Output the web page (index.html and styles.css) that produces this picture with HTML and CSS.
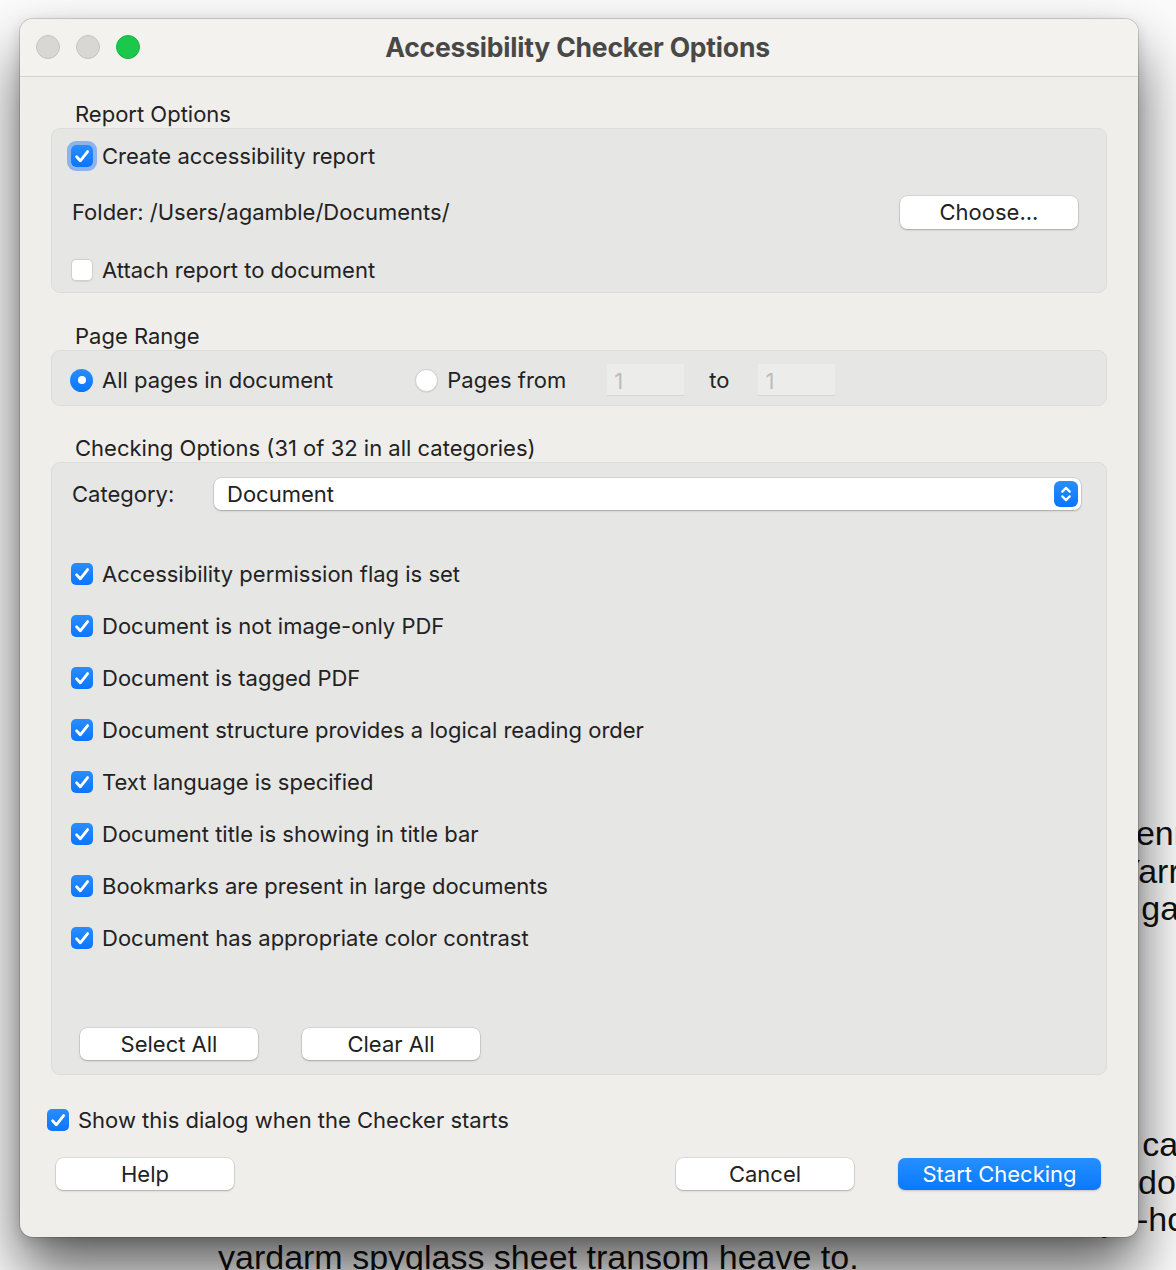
FILE: index.html
```html
<!DOCTYPE html>
<html lang="en">
<head>
<meta charset="utf-8">
<title>Accessibility Checker Options</title>
<link rel="stylesheet" href="styles.css">
</head>
<body>
<div class="desktop">
  <div class="doc">
    <div class="doc-line d1">pennant hail-shot</div>
    <div class="doc-line d2">Yarr grog</div>
    <div class="doc-line d3">a gangway</div>
    <div class="doc-line d4">o cannon</div>
    <div class="doc-line d5">down</div>
    <div class="doc-line d6">yo-ho-ho</div>
    <div class="doc-line d7">yardarm spyglass sheet transom heave to.</div>
  </div>

  <div class="window">
    <div class="titlebar">
      <div class="lights">
        <span class="light gray"></span>
        <span class="light gray"></span>
        <span class="light green"></span>
      </div>
      <div class="title">Accessibility Checker Options</div>
    </div>

    <div class="content">
      <div class="section-label first">Report Options</div>
      <div class="group report">
        <div class="row">
          <span class="cb on focus"><svg viewBox="0 0 22 22"><path d="M5.6 11.8l3.7 4L16.6 6.6"/></svg></span>
          <span class="lbl">Create accessibility report</span>
        </div>
        <div class="row folder">
          <span class="lbl path">Folder: /Users/agamble/Documents/</span>
          <button class="btn choose">Choose...</button>
        </div>
        <div class="row attach">
          <span class="cb off"></span>
          <span class="lbl">Attach report to document</span>
        </div>
      </div>

      <div class="section-label">Page Range</div>
      <div class="group range">
        <div class="row">
          <span class="radio on"></span>
          <span class="lbl">All pages in document</span>
          <span class="radio off second"></span>
          <span class="lbl">Pages from</span>
          <span class="field from">1</span>
          <span class="lbl to">to</span>
          <span class="field">1</span>
        </div>
      </div>

      <div class="section-label third">Checking Options (31 of 32 in all categories)</div>
      <div class="group checks">
        <div class="row category">
          <span class="lbl cat-lbl">Category:</span>
          <div class="select">
            <span class="sel-text">Document</span>
            <span class="stepper"><svg viewBox="0 0 24 26"><path d="M8.3 10.6L12 6.9l3.7 3.7M8.3 15.4L12 19.1l3.7-3.7"/></svg></span>
          </div>
        </div>
        <div class="check-list">
          <div class="row"><span class="cb on"><svg viewBox="0 0 22 22"><path d="M5.6 11.8l3.7 4L16.6 6.6"/></svg></span><span class="lbl">Accessibility permission flag is set</span></div>
          <div class="row"><span class="cb on"><svg viewBox="0 0 22 22"><path d="M5.6 11.8l3.7 4L16.6 6.6"/></svg></span><span class="lbl">Document is not image-only PDF</span></div>
          <div class="row"><span class="cb on"><svg viewBox="0 0 22 22"><path d="M5.6 11.8l3.7 4L16.6 6.6"/></svg></span><span class="lbl">Document is tagged PDF</span></div>
          <div class="row"><span class="cb on"><svg viewBox="0 0 22 22"><path d="M5.6 11.8l3.7 4L16.6 6.6"/></svg></span><span class="lbl">Document structure provides a logical reading order</span></div>
          <div class="row"><span class="cb on"><svg viewBox="0 0 22 22"><path d="M5.6 11.8l3.7 4L16.6 6.6"/></svg></span><span class="lbl">Text language is specified</span></div>
          <div class="row"><span class="cb on"><svg viewBox="0 0 22 22"><path d="M5.6 11.8l3.7 4L16.6 6.6"/></svg></span><span class="lbl">Document title is showing in title bar</span></div>
          <div class="row"><span class="cb on"><svg viewBox="0 0 22 22"><path d="M5.6 11.8l3.7 4L16.6 6.6"/></svg></span><span class="lbl">Bookmarks are present in large documents</span></div>
          <div class="row"><span class="cb on"><svg viewBox="0 0 22 22"><path d="M5.6 11.8l3.7 4L16.6 6.6"/></svg></span><span class="lbl">Document has appropriate color contrast</span></div>
        </div>
        <div class="group-buttons">
          <button class="btn">Select All</button>
          <button class="btn">Clear All</button>
        </div>
      </div>

      <div class="row show">
        <span class="cb on"><svg viewBox="0 0 22 22"><path d="M5.6 11.8l3.7 4L16.6 6.6"/></svg></span>
        <span class="lbl">Show this dialog when the Checker starts</span>
      </div>

      <div class="footer">
        <button class="btn">Help</button>
        <div class="footer-right">
          <button class="btn">Cancel</button>
          <button class="btn primary">Start Checking</button>
        </div>
      </div>
    </div>
  </div>
</div>
</body>
</html>
```

FILE: styles.css
```css
html, body {
  margin: 0;
  padding: 0;
  width: 1176px;
  height: 1270px;
  overflow: hidden;
  background: #fbfbfb;
}

.desktop {
  position: relative;
  width: 1176px;
  height: 1270px;
  overflow: hidden;
}

/* document behind the dialog */
.doc {
  position: absolute;
  left: 0;
  top: 815px;
  width: 1176px;
  font-family: "Liberation Sans", Arial, sans-serif;
  font-size: 34px;
  color: #111;
  line-height: 37.5px;
  white-space: nowrap;
}
.doc-line { height: 37.5px; }
.d1 { padding-left: 1117px; }
.d2 { padding-left: 1118px; }
.d3 { padding-left: 1113px; margin-bottom: 198.5px; }
.d4 { padding-left: 1114px; }
.d5 { padding-left: 1138px; }
.d6 { padding-left: 1101px; }
.d7 { padding-left: 218px; }

/* window */
.window {
  position: absolute;
  left: 20px;
  top: 19px;
  width: 1118px;
  box-sizing: border-box;
  background: #efeeeb;
  border-radius: 13px;
  box-shadow: 0 0 0 1px rgba(0,0,0,0.14), 0 34px 60px rgba(0,0,0,0.62), 0 4px 14px rgba(0,0,0,0.14);
  font-family: "Inter", "Noto Sans", sans-serif;
  font-size: 22px;
  color: #222;
  overflow: hidden;
}

.titlebar {
  position: relative;
  height: 57px;
  background: #f3f2ef;
  border-bottom: 1px solid #d3d2cf;
  display: flex;
  align-items: center;
  justify-content: center;
}
.lights {
  position: absolute;
  left: 16px;
  top: 16px;
  display: flex;
  gap: 16px;
}
.light {
  width: 24px;
  height: 24px;
  border-radius: 50%;
  box-sizing: border-box;
}
.light.gray { background: #d9d7d4; border: 1px solid #c6c4c1; }
.light.green { background: #1bc84b; border: 1px solid #17b443; }
.title {
  font-weight: 700;
  font-size: 26.5px;
  color: #484846;
  letter-spacing: -0.2px;
  padding-right: 3px;
  padding-bottom: 2px;
}

.content {
  padding: 0 31px 47px 31px;
}

.section-label {
  margin: 31px 0 2px 24px;
  line-height: 24px;
  color: #222;
}
.section-label.first { margin-top: 25px; }
.section-label.third { margin-top: 30px; }

.group {
  background: #e6e6e5;
  border: 1px solid #dcdcda;
  border-radius: 9px;
}

.row {
  display: flex;
  align-items: center;
  height: 34px;
}
.lbl { white-space: nowrap; }

.report { padding: 10px 20px 5px 19px; }
.report .folder {
  margin-top: 22px;
  justify-content: space-between;
  padding-left: 1px;
  padding-right: 8px;
}
.report .attach { margin-top: 24px; }

.cb {
  flex: none;
  width: 22px;
  height: 22px;
  box-sizing: border-box;
  border-radius: 5px;
  margin-right: 9px;
  display: flex;
  align-items: center;
  justify-content: center;
}
.cb.on {
  background: linear-gradient(#2a8dff, #0b76fb);
}
.cb.on svg { width: 22px; height: 22px; }
.cb.on path {
  fill: none;
  stroke: #fff;
  stroke-width: 2.8;
  stroke-linecap: round;
  stroke-linejoin: round;
}
.cb.off {
  background: #fff;
  border: 1px solid #d0d0ce;
  box-shadow: 0 0.5px 1px rgba(0,0,0,0.08);
}
.cb.focus {
  box-shadow: 0 0 0 4px rgba(52,128,246,0.5);
}

.btn {
  font-family: "Inter", "Noto Sans", sans-serif;
  font-size: 22px;
  color: #222;
  background: #fff;
  border: none;
  border-radius: 7px;
  width: 178px;
  height: 32px;
  padding: 0;
  box-shadow: 0 0 0 0.5px rgba(0,0,0,0.14), 0 1px 2px rgba(0,0,0,0.22);
}
.btn.choose { height: 33px; }
.btn.primary {
  width: 203px;
  color: #fff;
  background: linear-gradient(#2590ff, #0a78fb);
  box-shadow: 0 1px 2px rgba(0,0,0,0.18);
}

/* page range */
.range { padding: 12px 20px 8px 18px; }
.radio {
  flex: none;
  width: 23px;
  height: 23px;
  box-sizing: border-box;
  border-radius: 50%;
  margin-right: 9px;
  display: flex;
  align-items: center;
  justify-content: center;
}
.radio.on { background: linear-gradient(#2a8dff, #0b76fb); }
.radio.on::after {
  content: "";
  width: 8px;
  height: 8px;
  border-radius: 50%;
  background: #fff;
}
.radio.off {
  background: #fff;
  border: 1px solid #cfcfcd;
  box-shadow: 0 0.5px 1px rgba(0,0,0,0.1);
}
.radio.second { margin-left: 82px; }
.field {
  flex: none;
  width: 77px;
  height: 32px;
  box-sizing: border-box;
  background: #ececeb;
  border-bottom: 1px solid #d6d6d4;
  color: #bdbdbb;
  padding: 3px 0 0 7px;
  line-height: 28px;
}
.field.from { margin-left: 41px; }
.lbl.to { margin: 0 29px 0 25px; }

/* checking options */
.checks { padding: 15px 25px 14px 19px; }
.category { height: 32px; }
.cat-lbl { padding-left: 1px; width: 142px; }
.select {
  flex: 1;
  height: 32px;
  background: #fff;
  border-radius: 7px;
  box-shadow: 0 0 0 0.5px rgba(0,0,0,0.14), 0 1px 2px rgba(0,0,0,0.22);
  display: flex;
  align-items: center;
  justify-content: space-between;
  padding: 0 3px 0 13px;
}
.stepper {
  width: 24px;
  height: 26px;
  border-radius: 6px;
  background: linear-gradient(#2a8dff, #0b76fb);
  display: flex;
}
.stepper svg { width: 24px; height: 26px; }
.stepper path {
  fill: none;
  stroke: #fff;
  stroke-width: 2.2;
  stroke-linecap: round;
  stroke-linejoin: round;
}
.check-list {
  margin-top: 47px;
  display: flex;
  flex-direction: column;
  gap: 18px;
}
.group-buttons {
  margin-top: 73px;
  padding-left: 9px;
  display: flex;
  gap: 44px;
}

.row.show {
  margin-top: 28px;
  margin-left: -4px;
}

.footer {
  margin-top: 21px;
  display: flex;
  justify-content: space-between;
  padding: 0 6px 0 5px;
}
.footer-right {
  display: flex;
  gap: 44px;
}
```
